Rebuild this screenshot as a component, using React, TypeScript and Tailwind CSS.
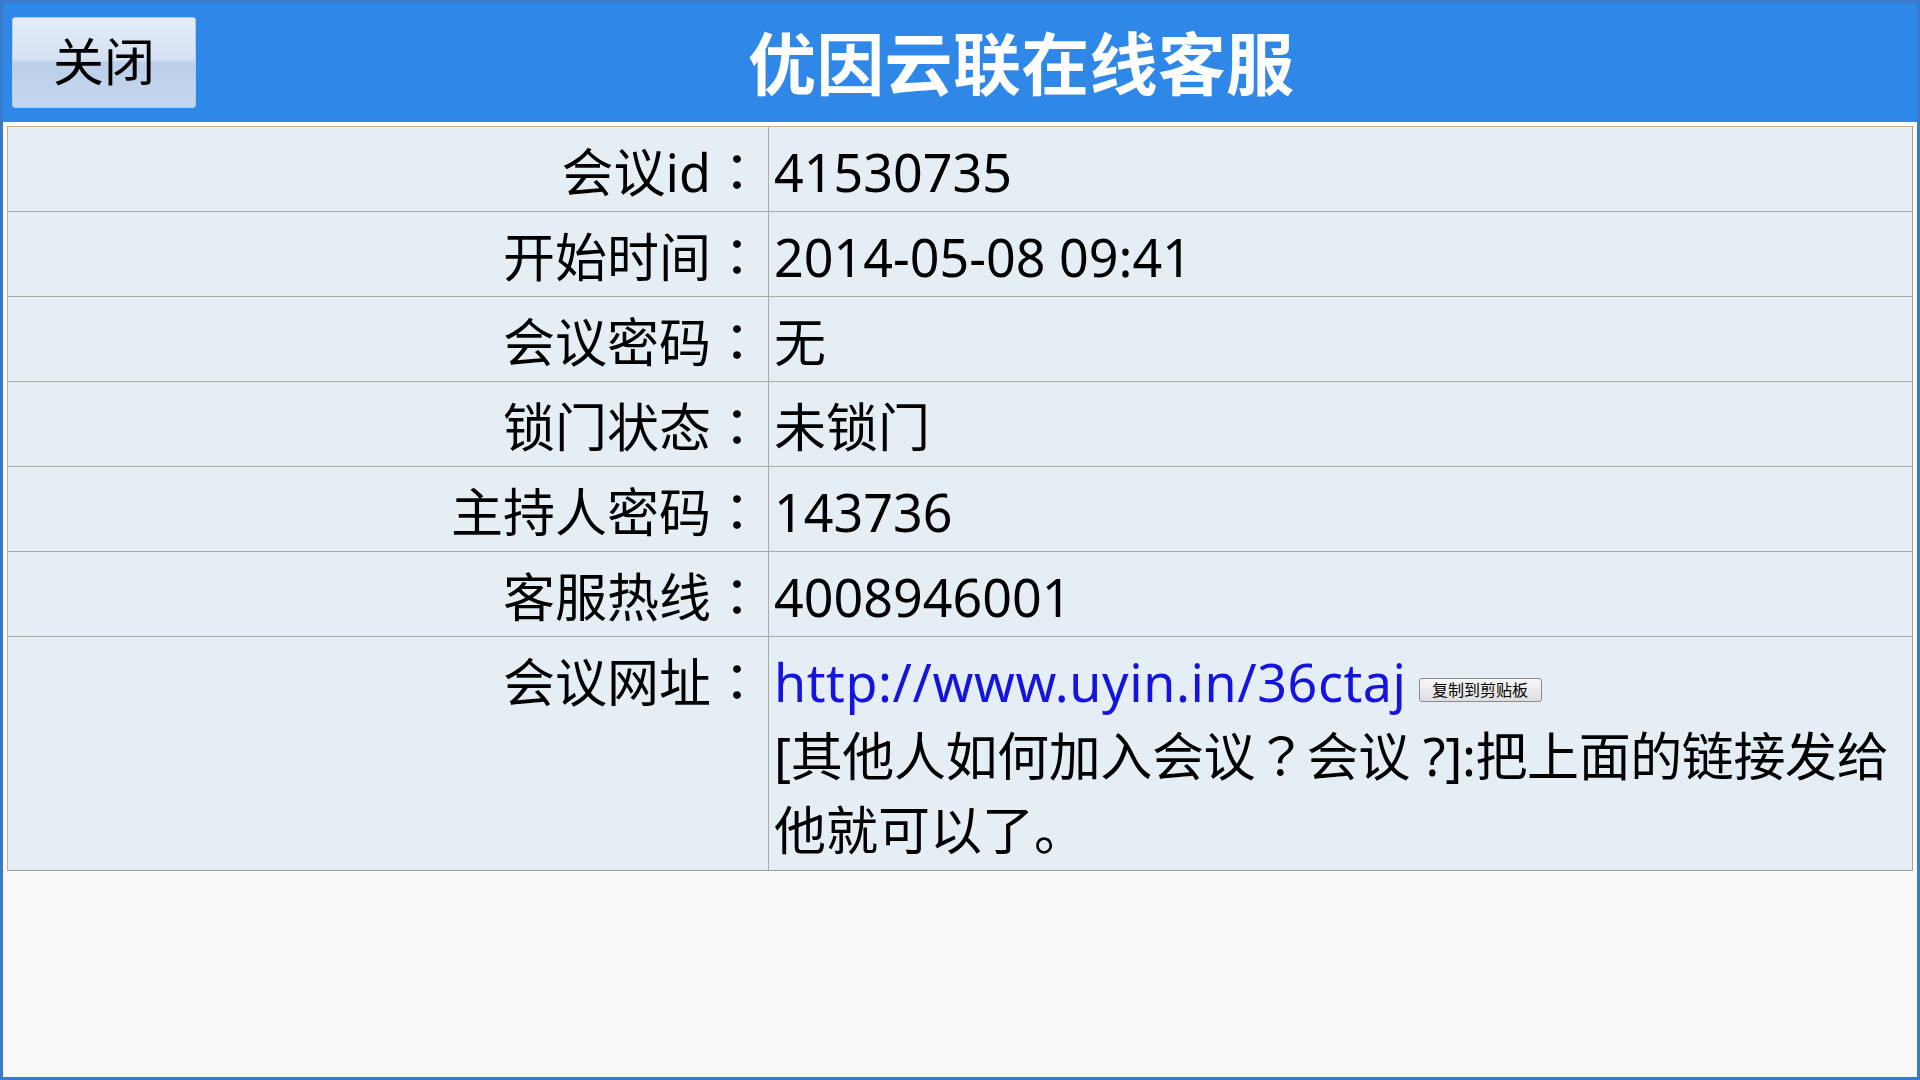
import React from "react";

const jp = "font-['Noto_Sans_CJK_JP',sans-serif] leading-[0px]";

const rows: { label: string; value: string }[] = [
  { label: "会议id", value: "41530735" },
  { label: "开始时间", value: "2014-05-08 09:41" },
  { label: "会议密码", value: "无" },
  { label: "锁门状态", value: "未锁门" },
  { label: "主持人密码", value: "143736" },
  { label: "客服热线", value: "4008946001" },
];

function Colon() {
  return <span className={jp}>：</span>;
}

export default function App() {
  return (
    <div className="w-[1920px] h-[1080px] border-[3px] border-[#3a7acb] bg-[#f9f9f9] flex flex-col font-['Noto_Sans','Noto_Sans_CJK_SC',sans-serif] text-black overflow-hidden">
      <div className="h-[119px] bg-[#2f87e7] flex items-center shrink-0">
        <button className="ml-[9px] w-[184px] h-[91px] rounded-[3px] border border-[#b7c9e2] bg-[linear-gradient(to_bottom,#e3ebf7_0%,#d6e2f3_47%,#bccfe9_50%,#c4d7f0_100%)] text-[51px] leading-none text-black flex items-center justify-center pb-[2px]">
          关闭
        </button>
        <div className="ml-[552px] text-white font-bold text-[68px] leading-none pt-[2px] tracking-[0.3px]">
          优因云联在线客服
        </div>
      </div>
      <div className="h-[4px] bg-white shrink-0" />
      <div className="mx-[4px] border-t border-l border-t-[#c5b48e] border-l-[#c5b48e] border-r border-b border-r-[#9aa39a] border-b-[#9aa39a] bg-[#e6eef5] text-[52px] leading-[74px]">
        {rows.map((r) => (
          <div key={r.label} className="grid grid-cols-[761px_1fr] h-[85px] border-b border-[#a7ada7] overflow-hidden">
            <div className="text-right pr-[5px] pt-[8px] border-r border-[#a7ada7] whitespace-nowrap">
              <div className="h-[74px]">
                {r.label}
                <Colon />
              </div>
            </div>
            <div className="pl-[5px] pt-[8px] whitespace-nowrap">
              <div className="h-[74px]">{r.value}</div>
            </div>
          </div>
        ))}
        <div className="grid grid-cols-[761px_1fr] h-[233px] overflow-hidden">
          <div className="text-right pr-[5px] pt-[8px] border-r border-[#a7ada7] whitespace-nowrap">
            <div className="h-[74px]">
              会议网址
              <Colon />
            </div>
          </div>
          <div className="pl-[5px] pt-[8px]">
            <div className="whitespace-nowrap h-[74px]">
              <span className="text-[#1414de] tracking-[0.6px]">http://www.uyin.in/36ctaj</span>
              <span className="inline-flex items-center justify-center ml-[12px] w-[123px] h-[24px] align-[6px] rounded-[3px] border border-[#8a8a8a] bg-[linear-gradient(to_bottom,#f7f7f7,#dedede)] text-[16px] leading-none text-black">
                复制到剪贴板
              </span>
            </div>
            <div className="whitespace-nowrap tracking-[-0.4px] h-[74px]">
              [其他人如何加入会议<span className={jp}>？</span>会议 ?]:把上面的链接发给
            </div>
            <div className="whitespace-nowrap h-[74px]">他就可以了。</div>
          </div>
        </div>
      </div>
      <div className="flex-1" />
    </div>
  );
}
